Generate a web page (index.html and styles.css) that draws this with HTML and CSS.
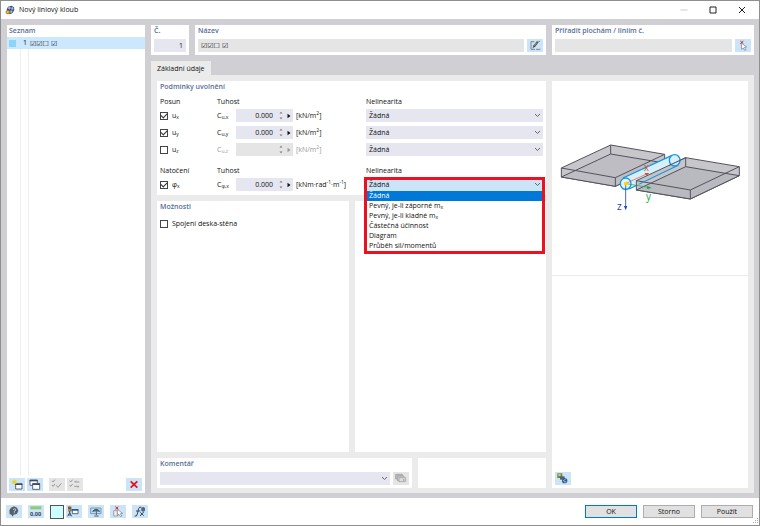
FILE: index.html
```html
<!DOCTYPE html>
<html lang="cs">
<head>
<meta charset="utf-8">
<title>Nový liniový kloub</title>
<link rel="stylesheet" href="styles.css">
</head>
<body>
<svg class="defs" aria-hidden="true">
  <symbol id="chevron" viewBox="0 0 7 5"><path d="M1 1l2.5 2.5L6 1" fill="none" stroke="#666" stroke-width="1"/></symbol>
  <symbol id="updown" viewBox="0 0 6 9"><path d="M1.5 2.5L3 .8 4.5 2.5zM1.5 6.500L3 8.200 4.500 6.500z" fill="#777"/></symbol>
  <symbol id="play" viewBox="0 0 4 6"><path d="M.5 .8v4.4L3.5 3z" fill="currentColor"/></symbol>
</svg>
<div class="window">
  <header class="titlebar">
    <svg class="logo" viewBox="0 0 30 30"><path d="M5 14L9 5l10-3 8 5 1 8-6 10-9 3-7-5z" fill="#34496f"/><path d="M8 9l6-5 4 5-5 5zM18 8l6-2 2 7-6 2zM15 17l6-1 2 5-6 4z" fill="#a9b9d6"/><path d="M2 18l7-3 6 4-1 7-7 2-5-4z" fill="#b48a22"/><path d="M5 20l4-2 3 3-4 3z" fill="#f0d577"/></svg>
    <h1>Nový liniový kloub</h1>
    <button class="caption" aria-label="Minimalizovat"><svg viewBox="0 0 8 8"><path d="M.5 4h7" stroke="#ccc" fill="none"/></svg></button>
    <button class="caption" aria-label="Maximalizovat"><svg viewBox="0 0 8 8"><path d="M1 1h6v6H1z" stroke="#222" fill="none"/></svg></button>
    <button class="caption" aria-label="Zavřít"><svg viewBox="0 0 8 8"><path d="M1 1l6 6M7 1L1 7" stroke="#222" fill="none"/></svg></button>
  </header>

  <div class="body">
    <aside class="panel list">
      <h2>Seznam</h2>
      <ul class="items">
        <li class="item"><span class="color"></span><span class="num">1</span><span class="glyphs">☑☑☐ ☑</span></li>
        <li class="blank"><span></span><span></span><span></span></li>
      </ul>
      <div class="tools">
        <button class="icon" aria-label="Nový"><svg viewBox="0 0 48 39"><path d="M20 17h19v16H20z" fill="#fff" stroke="#3e4c66" stroke-width="2.5"/><path d="M19 17h21v4H19z" fill="#3e4c66"/><path d="M16 4v16M8 12h16M10 6l12 12M22 6L10 18" stroke="#e6d616" stroke-width="3"/></svg></button>
        <button class="icon" aria-label="Kopírovat"><svg viewBox="0 0 48 39"><path d="M9 6h22v16H9z" fill="#fff" stroke="#3e4c66" stroke-width="2.5"/><path d="M8 6h24v4H8z" fill="#3e4c66"/><path d="M17 17h21v17H17z" fill="#fff" stroke="#3e4c66" stroke-width="2.5"/><path d="M16 16h23v5H16z" fill="#3e4c66"/></svg></button>
        <button class="icon off gap" aria-label="Vybrat vše" disabled><svg viewBox="0 0 48 39"><path d="M9 8l3 4 6-7M9 21l3 4 6-7M22 22l5 6 10-12" fill="none" stroke="#999" stroke-width="3"/></svg></button>
        <button class="icon off" aria-label="Obrátit výběr" disabled><svg viewBox="0 0 48 39"><path d="M8 8l3 4 6-7M8 21l3 4 6-7M23 12h14M23 12l4-4M22 25h14l-4 4" fill="none" stroke="#999" stroke-width="3"/></svg></button>
        <button class="icon end" aria-label="Smazat"><svg viewBox="0 0 48 39"><path d="M14 10l20 19M34 10L14 29" stroke="#e8121c" stroke-width="5.5"/></svg></button>
      </div>
    </aside>

    <main class="content">
      <div class="top">
        <section class="panel number">
          <h2><label for="no">Č.</label></h2>
          <div class="line"><input id="no" class="field right" value="1"></div>
        </section>
        <section class="panel name">
          <h2><label for="name">Název</label></h2>
          <div class="line"><input id="name" class="field gray glyphs" value="☑☑☐ ☑" readonly>
          <button class="icon" aria-label="Upravit název"><svg viewBox="0 0 48 39"><path d="M22 8H12v23h12M27 31h13M34 7h5" fill="none" stroke="#555" stroke-width="2"/><path d="M17 27l2-8L30 6l5 4-11 14z" fill="#555"/><path d="M21 20l8-9" stroke="#ddd" stroke-width="2"/></svg></button></div>
        </section>
        <section class="panel assign">
          <h2><label for="assign">Přiřadit plochám / liniím č.</label></h2>
          <div class="line"><input id="assign" class="field gray" readonly>
          <button class="icon" aria-label="Vybrat v grafice"><svg viewBox="0 0 48 39"><path d="M16 6l9 8M25 6l-9 8" stroke="#d4202c" stroke-width="3"/><path d="M19 12l16 12-7 1 5 7-4 2-4-7-5 4z" fill="#fff" stroke="#777" stroke-width="2"/></svg></button></div>
        </section>
      </div>

      <nav class="tabs"><button class="tab">Základní údaje</button></nav>

      <div class="page">
        <div class="forms">
          <section class="panel release">
            <h2>Podmínky uvolnění</h2>
            <div class="grid head"><span>Posun</span><span class="span3">Tuhost</span><span>Nelinearita</span></div>
            <div class="grid">
              <label class="check"><input type="checkbox" checked><span>u<sub>x</sub></span></label>
              <label for="cx">C<sub>u,x</sub></label>
              <div class="spin"><input id="cx" value="0.000"><button aria-label="Krok"><svg class="ud"><use href="#updown"/></svg></button><button aria-label="Nabídka"><svg class="pl"><use href="#play"/></svg></button></div>
              <span>[kN/m<sup>2</sup>]</span>
              <div class="select"><select aria-label="Nelinearita ux"><option>Žádná</option></select><svg><use href="#chevron"/></svg></div>
            </div>
            <div class="grid">
              <label class="check"><input type="checkbox" checked><span>u<sub>y</sub></span></label>
              <label for="cy">C<sub>u,y</sub></label>
              <div class="spin"><input id="cy" value="0.000"><button aria-label="Krok"><svg class="ud"><use href="#updown"/></svg></button><button aria-label="Nabídka"><svg class="pl"><use href="#play"/></svg></button></div>
              <span>[kN/m<sup>2</sup>]</span>
              <div class="select"><select aria-label="Nelinearita uy"><option>Žádná</option></select><svg><use href="#chevron"/></svg></div>
            </div>
            <div class="grid">
              <label class="check"><input type="checkbox"><span>u<sub>z</sub></span></label>
              <label class="dim" for="cz">C<sub>u,z</sub></label>
              <div class="spin disabled"><input id="cz" disabled><button aria-label="Krok" disabled><svg class="ud"><use href="#updown"/></svg></button><button aria-label="Nabídka" disabled><svg class="pl"><use href="#play"/></svg></button></div>
              <span class="dim">[kN/m<sup>2</sup>]</span>
              <div class="select"><select aria-label="Nelinearita uz"><option>Žádná</option></select><svg><use href="#chevron"/></svg></div>
            </div>
            <div class="grid head second"><span>Natočení</span><span class="span3">Tuhost</span><span>Nelinearita</span></div>
            <div class="grid">
              <label class="check"><input type="checkbox" checked><span>φ<sub>x</sub></span></label>
              <label for="cp">C<sub>φ,x</sub></label>
              <div class="spin"><input id="cp" value="0.000"><button aria-label="Krok"><svg class="ud"><use href="#updown"/></svg></button><button aria-label="Nabídka"><svg class="pl"><use href="#play"/></svg></button></div>
              <span>[kNm·rad<sup>-1</sup>·m<sup>-1</sup>]</span>
              <div class="select open"><select aria-label="Nelinearita φx"><option>Žádná</option></select><svg><use href="#chevron"/></svg>
                <div class="popup">
                  <ul role="listbox" aria-label="Nelinearita">
                    <li role="option" aria-selected="true">Žádná</li>
                    <li role="option">Pevný, je-li záporné m<sub>x</sub></li>
                    <li role="option">Pevný, je-li kladné m<sub>x</sub></li>
                    <li role="option">Částečná účinnost</li>
                    <li role="option">Diagram</li>
                    <li role="option">Průběh sil/momentů</li>
                  </ul>
                </div>
              </div>
            </div>
          </section>

          <div class="middle">
            <section class="panel options">
              <h2>Možnosti</h2>
              <label class="check"><input type="checkbox"><span>Spojení deska-stěna</span></label>
            </section>
            <section class="panel"></section>
          </div>

          <div class="bottom">
            <section class="panel comment">
              <h2><label for="comment">Komentář</label></h2>
              <div class="line">
                <div class="select"><select id="comment"><option></option></select><svg><use href="#chevron"/></svg></div>
                <button class="icon off" aria-label="Komentáře" disabled><svg viewBox="0 0 48 39"><path d="M8 7h20v14H8z" fill="#bbb" stroke="#999" stroke-width="2"/><path d="M13 12h20v14H13z" fill="#ccc" stroke="#999" stroke-width="2"/><path d="M18 17h20v12H18z" fill="#ddd" stroke="#999" stroke-width="2"/><path d="M30 22h4v4h-4z" fill="#999"/></svg></button>
              </div>
            </section>
            <section class="panel"></section>
          </div>
        </div>

        <section class="panel viewer">
          <svg class="scene" viewBox="6 -147 588 582" role="img" aria-label="Liniový kloub">
            <g stroke="#55525f" stroke-width="3" stroke-linejoin="round">
              <path d="M34 114L182 45 344 73 344 99 196 169 34 141z" fill="#c6c6cb"/>
              <path d="M34 141L182 72 344 99 196 169z" fill="#bdbdc3"/>
              <path d="M34 114L196 143 344 73M196 143V169M182 45V72" fill="none"/>
            </g>
            <g fill="none" stroke="#1496dc" stroke-width="4">
              <path d="M219 144L365 76 382 76 390 90 386 103 240 177 226 179 212 164z" fill="#d7effb" stroke="none"/>
              <path d="M219 144L366 76M237 177L384 106"/>
              <ellipse cx="227" cy="161" rx="16" ry="17" fill="#e4f5fd"/>
            </g>
            <g stroke="#55525f" stroke-width="3" stroke-linejoin="round">
              <path d="M259 152L407 83 568 110 568 137 421 207 259 180z" fill="#bcbcc2" fill-opacity=".85"/>
              <path d="M259 180L407 110 568 137 421 207z" fill="#b4b4bb" fill-opacity=".7"/>
              <path d="M259 152L421 180 568 110M421 180V207M407 83V110" fill="none"/>
            </g>
            <path d="M268 162L386 105" stroke="#1496dc" stroke-width="3"/>
            <ellipse cx="374" cy="91" rx="16" ry="17" fill="#d7effb" fill-opacity=".7" stroke="#1496dc" stroke-width="4"/>
            <path d="M358 106L407 83" stroke="#55525f" stroke-width="3"/>
            <g stroke="#d2502d" fill="#d2502d" stroke-width="2"><path d="M228 160L290 132" fill="none"/><path d="M298 129l-14 0 5 9z" stroke="none"/></g>
            <g stroke="#16a34a" fill="#16a34a"><path d="M228 161L295 172" stroke-width="2"/><path d="M305 174l-13-6-1 9z" stroke="none"/></g>
            <g stroke="#2344b8" fill="#2344b8"><path d="M227 163V230" stroke-width="2.5"/><path d="M227 241l-5-13h10z" stroke="none"/></g>
            <circle cx="227" cy="161" r="6" fill="#ffd70a"/>
            <text class="axis" x="281" y="122" fill="#d2502d">x</text>
            <text class="axis" x="288" y="209" fill="#16a34a">y</text>
            <text class="axis" x="201" y="240" fill="#2344b8">z</text>
          </svg>
          <div class="details">
            <button class="icon" aria-label="Zobrazení"><svg viewBox="0 0 48 39"><path d="M7 4h15v14H7z" fill="#6f8250"/><path d="M10 6h7v6h-7z" fill="#c4d94e"/><path d="M15 13h14v10H15z" fill="#51637a"/><circle cx="29" cy="26" r="8" fill="#34598c"/><path d="M24 27l8-6M27 29l7 1" stroke="#c5d9ec" stroke-width="2.5"/></svg></button>
          </div>
        </section>
      </div>
    </main>
  </div>

  <footer class="footer">
    <button class="icon" aria-label="Nápověda"><svg viewBox="0 0 48 39"><path d="M15 8l9-4 9 4 4 9-4 9-10 4-4 5-2-6-6-1-1-12z" fill="#555f6a"/><path d="M21 14q4-5 8-1 1 4-4 6v4M24 26v2" fill="none" stroke="#dce8f3" stroke-width="2.5"/></svg></button>
    <button class="icon" aria-label="Jednotky"><svg viewBox="0 0 48 39"><path d="M7 4h33v9H7z" fill="#8cc97b"/><text class="digits" x="6" y="32">0,00</text></svg></button>
    <button class="swatch" aria-label="Barva"></button>
    <button class="icon join" aria-label="Zobrazit vlastnosti"><svg viewBox="0 0 48 39"><path d="M6 5h10v14H6z" fill="#424b58"/><path d="M7 5h7v6H7z" fill="#d94330"/><path d="M7 12h4v6H7z" fill="#e8ba26"/><path d="M12 12h5v6h-5z" fill="#35a05c"/><path d="M19 14h17v12H19z" fill="#fff" stroke="#3e4c66" stroke-width="2.5"/><path d="M18 12h19v5H18z" fill="#315496"/><path d="M11 18v8M5 34l6-11 6 11M7 30h8" fill="none" stroke="#424b58" stroke-width="3"/></svg></button>
    <button class="icon" aria-label="Pohled"><svg viewBox="0 0 48 39"><path d="M8 9h31v17H8z" fill="#bddcf3" stroke="#74889a" stroke-width="2.5"/><path d="M14 19q11-13 21 0l-10-2zM25 14v16M19 33h13" fill="#465f79" stroke="#465f79" stroke-width="3"/></svg></button>
    <button class="icon" aria-label="Zrušit výběr"><svg viewBox="0 0 48 39"><path d="M16 5l9 8M25 5l-9 8" stroke="#d4202c" stroke-width="3"/><path d="M11 17h12v16H11z" fill="#e7edf2" stroke="#888" stroke-width="2"/><path d="M22 13l16 12-7 1 5 7-5 1-4-6-5 4z" fill="#fff" stroke="#777" stroke-width="2"/></svg></button>
    <button class="icon" aria-label="Vzorce"><svg viewBox="0 0 48 39"><path d="M8 33q6 3 8-6l4-16q2-7 8-4M12 18h13M25 22l10 10M35 21L24 33" fill="none" stroke="#34465c" stroke-width="3"/><path d="M28 8q6-5 11 1v8l-6 4-6-5z" fill="#4f6987"/></svg></button>
    <span class="spacer"></span>
    <button class="push primary">OK</button>
    <button class="push">Storno</button>
    <button class="push">Použít</button>
    <svg class="grip" viewBox="0 0 6 6"><path d="M4 0h1v1H4zM2 2h1v1H2zM4 2h1v1H4zM0 4h1v1H0zM2 4h1v1H2zM4 4h1v1H4z" fill="#aaa"/></svg>
  </footer>
</div>
</body>
</html>
```
FILE: styles.css
```css
* { box-sizing: border-box; }
body {
  margin: 0;
  font: 7px/10px "Open Sans", "Noto Sans", sans-serif;
  color: #111;
}
h1, h2, ul { margin: 0; padding: 0; font: inherit; list-style: none; }
button, input, select { font: inherit; color: inherit; border: 0; padding: 0; margin: 0; border-radius: 0; min-width: 0; }
button { display: flex; align-items: center; justify-content: center; background: none; }
svg { display: block; }
sub, sup { font-size: 5px; line-height: 0; }
sub { vertical-align: -1px; }
.defs { position: absolute; width: 0; height: 0; }

.window {
  display: flex;
  flex-direction: column;
  min-height: 100vh;
  border: 1px solid #8f8f8f;
  background: #fff;
}

.titlebar { display: flex; align-items: center; height: 18px; padding: 0 3px 0 4px; }
.logo { width: 10px; height: 10px; margin-right: 4px; }
.titlebar h1 { flex: 1; }
.caption { width: 29px; height: 18px; }
.caption svg { width: 8px; height: 8px; }

.body {
  flex: 1;
  display: grid;
  grid-template-columns: 138px minmax(0, 1fr);
  gap: 6px;
  padding: 6px 5px 5px 6px;
  background: #d0cfd4;
}
.panel { background: #fff; }
.panel h2 { padding: 1px 3px 0; font-weight: 600; color: #566d98; height: 12px; }

.list { display: flex; flex-direction: column; }
.list h2 { padding: 1px 2px 0; }
.items { flex: 1; display: flex; flex-direction: column; }
.items li { display: grid; grid-template-columns: 14px 8px 1fr; align-items: center; }
.item { height: 12px; background: #cce8ff; }
.item .color { width: 7px; height: 7px; margin-left: 2px; background: #8bd5f5; }
.item .num { text-align: center; }
.items .blank { flex: 1; align-items: stretch; }
.blank span { border-right: 1px solid #eee; }
.blank span:last-child { border: 0; }
.glyphs { font-family: "DejaVu Sans", sans-serif; color: #222; }
.item .glyphs { padding: 1px 1px 0; }
.tools { display: flex; gap: 2px; padding: 3px 3px 2px 2px; }

.icon { flex: none; width: 16px; height: 13px; background: #cce4f7; }
.icon svg { width: 16px; height: 13px; }
.icon.off { background: #e5e5e5; }
.icon.gap { margin-left: 4px; }
.icon.end { margin-left: auto; }

.content { display: flex; flex-direction: column; }
.top { display: grid; grid-template-columns: 38px minmax(0, 1fr) 202px; gap: 6px; }
.line { display: flex; gap: 3px; padding: 2px 3px 3px; }
.field { flex: 1; width: 100%; height: 13px; padding: 0 3px; background: #e6e6f1; }
.field.gray { background: #e5e5e5; }
.right { text-align: right; }

.tabs { display: flex; margin-top: 6px; }
.tab { height: 14px; padding: 2px 6px 0; background: #ebebeb; }
.page {
  flex: 1;
  display: grid;
  grid-template-columns: minmax(0, 1fr) 196px;
  gap: 6px;
  padding: 6px 6px 5px;
  background: #ebebeb;
}
.forms { display: flex; flex-direction: column; gap: 6px; }

.release { display: flex; flex-direction: column; gap: 4px; padding-bottom: 4px; }
.grid {
  display: grid;
  grid-template-columns: 57px 19px 60px 70px minmax(0, 1fr);
  align-items: center;
  height: 13px;
  padding: 0 3px;
  white-space: nowrap;
}
.grid.head { height: 10px; margin-bottom: -2px; }
.grid.second { margin-top: 6px; }
.span3 { grid-column: span 3; }
.dim { color: #999; }
.check { display: flex; align-items: center; gap: 4px; }
.check input {
  appearance: none;
  display: grid;
  place-items: center;
  width: 8px;
  height: 8px;
  border: 1px solid #444;
  background: #fff;
}
.check input:checked::before {
  content: "";
  width: 5px;
  height: 3px;
  border: solid #333;
  border-width: 0 0 1px 1px;
  transform: translateY(-1px) rotate(-45deg);
}

.spin { display: flex; width: 57px; height: 13px; background: #e6e6f1; }
.spin input { flex: 1; width: 0; background: none; text-align: right; }
.spin button { width: 8px; }
.spin button:first-of-type { margin-left: 4px; }
.spin.disabled { background: #e5e5e5; color: #999; }
.ud { width: 6px; height: 9px; }
.pl { width: 4px; height: 6px; }

.select { position: relative; flex: 1; height: 13px; background: #e6e6f1; }
.select select { appearance: none; display: block; width: 100%; height: 13px; padding: 0 3px; background: none; }
.select > svg { position: absolute; right: 2px; top: 4px; width: 7px; height: 5px; pointer-events: none; }
.open { background: #cce4f7; }
.popup {
  position: absolute;
  z-index: 1;
  inset: -1px -2px auto;
  padding-top: 11px;
  border: 3px solid #ed1020;
}
.popup ul { background: #fff; }
.popup li { height: 10px; padding: 0 2px; white-space: nowrap; }
.popup li[aria-selected] { background: #0078d7; color: #fff; }

.middle { flex: 1; display: grid; grid-template-columns: 192px minmax(0, 1fr); gap: 6px; }
.options .check { padding: 6px 3px; }
.bottom { display: grid; grid-template-columns: minmax(0, 2fr) minmax(0, 1fr); gap: 6px; }

.viewer { display: flex; flex-direction: column; }
.scene { width: 100%; }
.axis { font: 30px "Open Sans", sans-serif; }
.details { flex: 1; display: flex; align-items: flex-end; padding: 3px; border-top: 1px solid #ebebeb; }

.footer { display: flex; align-items: center; gap: 6px; height: 27px; padding: 0 6px 0 5px; position: relative; }
.digits { font: bold 17px "Open Sans", sans-serif; fill: #34465c; }
.swatch { width: 14px; height: 14px; border: 1px solid #555; background: #ccffff; }
.icon.join { margin-left: -4px; }
.spacer { flex: 1; }
.push { width: 52px; height: 13px; border: 1px solid #adadad; background: #e1e1e1; }
.push.primary { border: 1px solid #0078d7; }
.grip { position: absolute; right: 0; bottom: 1px; width: 6px; height: 6px; }
```
